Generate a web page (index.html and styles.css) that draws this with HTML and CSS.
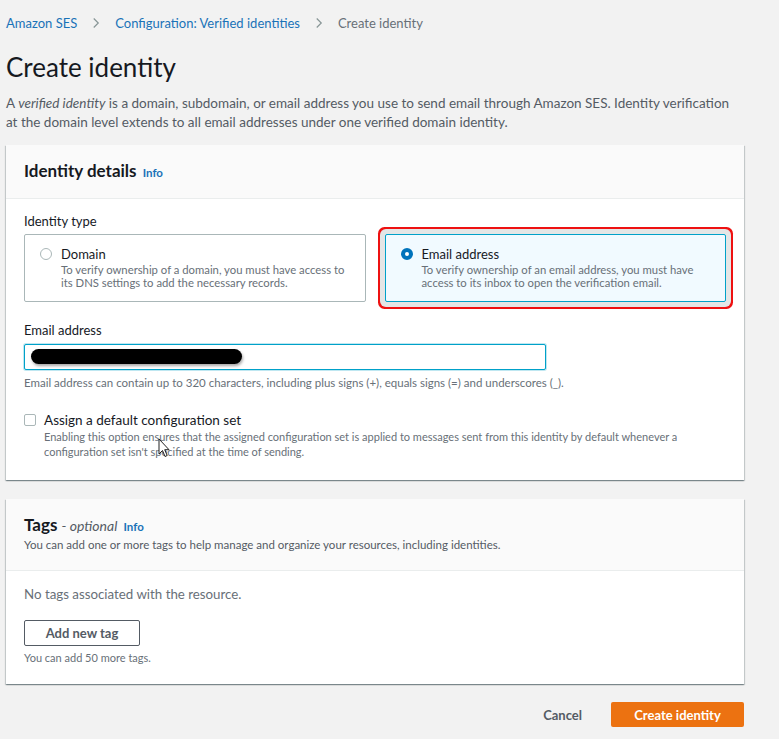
FILE: index.html
```html
<!DOCTYPE html>
<html lang="en">
<head>
<meta charset="utf-8">
<title>Create identity</title>
<link rel="stylesheet" href="styles.css">
</head>
<body>
<div class="page">
  <nav class="crumbs">
    <a class="crumb-link" href="#">Amazon SES</a>
    <svg class="chev" viewBox="0 0 16 16" width="12" height="12"><path d="M5 2l6 6-6 6" fill="none" stroke="#879596" stroke-width="1.6"/></svg>
    <a class="crumb-link" href="#">Configuration: Verified identities</a>
    <svg class="chev" viewBox="0 0 16 16" width="12" height="12"><path d="M5 2l6 6-6 6" fill="none" stroke="#879596" stroke-width="1.6"/></svg>
    <span class="crumb-current">Create identity</span>
  </nav>

  <h1 class="title">Create identity</h1>
  <p class="intro">A <em>verified identity</em> is a domain, subdomain, or email address you use to send email through Amazon SES. Identity verification at the domain level extends to all email addresses under one verified domain identity.</p>

  <section class="card">
    <header class="card-head">
      <h2 class="card-title">Identity details <a class="info" href="#">Info</a></h2>
    </header>
    <div class="card-body details-body">
      <div class="field-label">Identity type</div>
      <div class="tiles">
        <div class="tile">
          <span class="radio"></span>
          <div class="tile-text">
            <div class="tile-title">Domain</div>
            <div class="tile-desc">To verify ownership of a domain, you must have access to its DNS settings to add the necessary records.</div>
          </div>
        </div>
        <div class="tile tile-selected">
          <span class="radio radio-on"></span>
          <div class="tile-text">
            <div class="tile-title">Email address</div>
            <div class="tile-desc">To verify ownership of an email address, you must have access to its inbox to open the verification email.</div>
          </div>
        </div>
      </div>

      <div class="field-label email-label">Email address</div>
      <div class="input">
        <span class="redacted"></span>
      </div>
      <div class="help">Email address can contain up to 320 characters, including plus signs (+), equals signs (=) and underscores (_).</div>

      <div class="check-row">
        <span class="checkbox"></span>
        <div class="check-text">
          <div class="check-title">Assign a default configuration set</div>
          <div class="check-desc">Enabling this option ensures that the assigned configuration set is applied to messages sent from this identity by default whenever a configuration set isn't specified at the time of sending.</div>
        </div>
        <svg class="cursor" viewBox="0 0 12 20" width="12" height="20"><path d="M1 1v15l3.5-3.5 2.5 6 2.2-1-2.5-5.8H11z" fill="#fff" stroke="#222" stroke-width="1" stroke-linejoin="round"/></svg>
      </div>
    </div>
  </section>

  <section class="card">
    <header class="card-head tags-head">
      <h2 class="card-title">Tags <span class="optional">- optional</span> <a class="info" href="#">Info</a></h2>
      <div class="card-sub">You can add one or more tags to help manage and organize your resources, including identities.</div>
    </header>
    <div class="card-body tags-body">
      <div class="empty">No tags associated with the resource.</div>
      <button class="btn-normal" type="button">Add new tag</button>
      <div class="help small">You can add 50 more tags.</div>
    </div>
  </section>

  <div class="actions">
    <button class="btn-link" type="button">Cancel</button>
    <button class="btn-primary" type="button">Create identity</button>
  </div>
</div>
</body>
</html>
```

FILE: styles.css
```css
* { box-sizing: border-box; }

html, body {
  margin: 0;
  padding: 0;
  background: #f2f2f2;
}

body {
  font-family: Lato, "Open Sans", "Liberation Sans", sans-serif;
  color: #16191f;
  font-size: 13px;
}

.page {
  width: 738px;
  margin-left: 6px;
  padding-top: 14px;
}

.crumbs {
  display: flex;
  align-items: center;
  height: 17px;
  font-size: 13px;
}

.crumb-link {
  color: #1a72b8;
  text-decoration: none;
}

.chev {
  margin: 0 13px;
}

.crumb-current {
  color: #687078;
}

.title {
  margin: 20px 0 0;
  font-size: 26px;
  line-height: 32px;
  font-weight: 400;
  color: #16191f;
}

.intro {
  margin: 11px 0 0;
  padding-right: 8px;
  font-size: 13.5px;
  line-height: 19px;
  color: #545b64;
}

.intro em {
  font-style: italic;
}

.card {
  background: #fff;
  margin-top: 13px;
  box-shadow: 0 1px 1px 0 rgba(0, 28, 36, 0.3), 1px 1px 1px 0 rgba(0, 28, 36, 0.15), -1px 1px 1px 0 rgba(0, 28, 36, 0.15);
}

.card + .card {
  margin-top: 19px;
}

.card-head {
  background: #fafafa;
  border-bottom: 1px solid #eaeded;
  height: 54px;
  padding: 15px 18px 0;
}

.card-title {
  margin: 0;
  font-size: 17px;
  line-height: 22px;
  font-weight: 700;
  color: #16191f;
}

.info {
  font-size: 11.5px;
  font-weight: 700;
  color: #1a72b8;
  text-decoration: none;
  margin-left: 2px;
}

.optional {
  font-size: 14px;
  font-style: italic;
  font-weight: 400;
  color: #545b64;
}

.card-sub {
  font-size: 11.5px;
  line-height: 14px;
  color: #545b64;
  margin-top: 0;
}

.tags-head {
  height: 72px;
  padding-top: 15px;
}

.card-body {
  padding: 14px 18px 0;
}

.details-body {
  height: 281px;
}

.field-label {
  font-size: 13px;
  line-height: 16px;
  color: #16191f;
}

.tiles {
  display: grid;
  grid-template-columns: 1fr 1fr;
  gap: 19px;
  margin-top: 5px;
}

.tile {
  display: flex;
  align-items: flex-start;
  height: 68px;
  border: 1px solid #aab7b8;
  border-radius: 2px;
  padding: 11px 12px 0 15px;
}

.tile-selected {
  background: #f1faff;
  border-color: #00a1c9;
  box-shadow: 0 0 0 5px #e4e6e6, 0 0 0 7px #ee1111;
  border-radius: 2px;
}

.radio {
  flex: none;
  width: 12px;
  height: 12px;
  border-radius: 50%;
  border: 1px solid #aab7b8;
  background: #fff;
  margin-top: 2px;
  margin-right: 9px;
}

.radio-on {
  border: 4px solid #0073bb;
}

.tile-title {
  font-size: 13px;
  line-height: 16px;
  color: #16191f;
}

.tile-desc {
  font-size: 11.3px;
  line-height: 13px;
  color: #687078;
  margin-top: 1px;
}

.email-label {
  margin-top: 20px;
}

.input {
  width: 522px;
  height: 26px;
  margin-top: 6px;
  border: 1px solid #00a1c9;
  border-radius: 2px;
  background: #fff;
  padding: 4px 0 0 6px;
  box-shadow: 0 0 0 1px rgba(0, 161, 201, 0.25);
}

.redacted {
  display: block;
  width: 211px;
  height: 15px;
  background: #000;
  border-radius: 8px;
  box-shadow: 1px 2px 3px rgba(0, 0, 0, 0.35);
}

.help {
  font-size: 11.5px;
  line-height: 13px;
  color: #687078;
  margin-top: 6px;
}

.check-row {
  position: relative;
  display: flex;
  align-items: flex-start;
  margin-top: 23px;
}

.checkbox {
  flex: none;
  width: 12px;
  height: 12px;
  border: 1px solid #aab7b8;
  border-radius: 2px;
  background: #fff;
  margin-top: 2px;
  margin-right: 8px;
}

.check-title {
  font-size: 13.5px;
  line-height: 16px;
}

.check-desc {
  font-size: 11px;
  line-height: 15px;
  color: #687078;
  margin-top: 1px;
}

.cursor {
  position: absolute;
  left: 134px;
  top: 26px;
}

.tags-body {
  height: 113px;
  padding-top: 15px;
}

.empty {
  font-size: 13.3px;
  line-height: 16px;
  color: #687078;
}

.btn-normal {
  display: block;
  margin-top: 18px;
  width: 116px;
  height: 26px;
  border: 1px solid #545b64;
  border-radius: 2px;
  background: #fff;
  color: #545b64;
  font-family: inherit;
  font-size: 13px;
  font-weight: 700;
  padding: 0;
}

.help.small {
  font-size: 11px;
  margin-top: 5px;
}

.actions {
  display: flex;
  justify-content: flex-end;
  align-items: center;
  margin-top: 18px;
}

.btn-link {
  border: none;
  background: none;
  font-family: inherit;
  font-size: 13px;
  font-weight: 700;
  color: #545b64;
  padding: 0;
  margin-right: 29px;
}

.btn-primary {
  width: 133px;
  height: 25px;
  border: none;
  border-radius: 2px;
  background: #ec7211;
  color: #fff;
  font-family: inherit;
  font-size: 13px;
  font-weight: 700;
  padding: 0;
}
```
